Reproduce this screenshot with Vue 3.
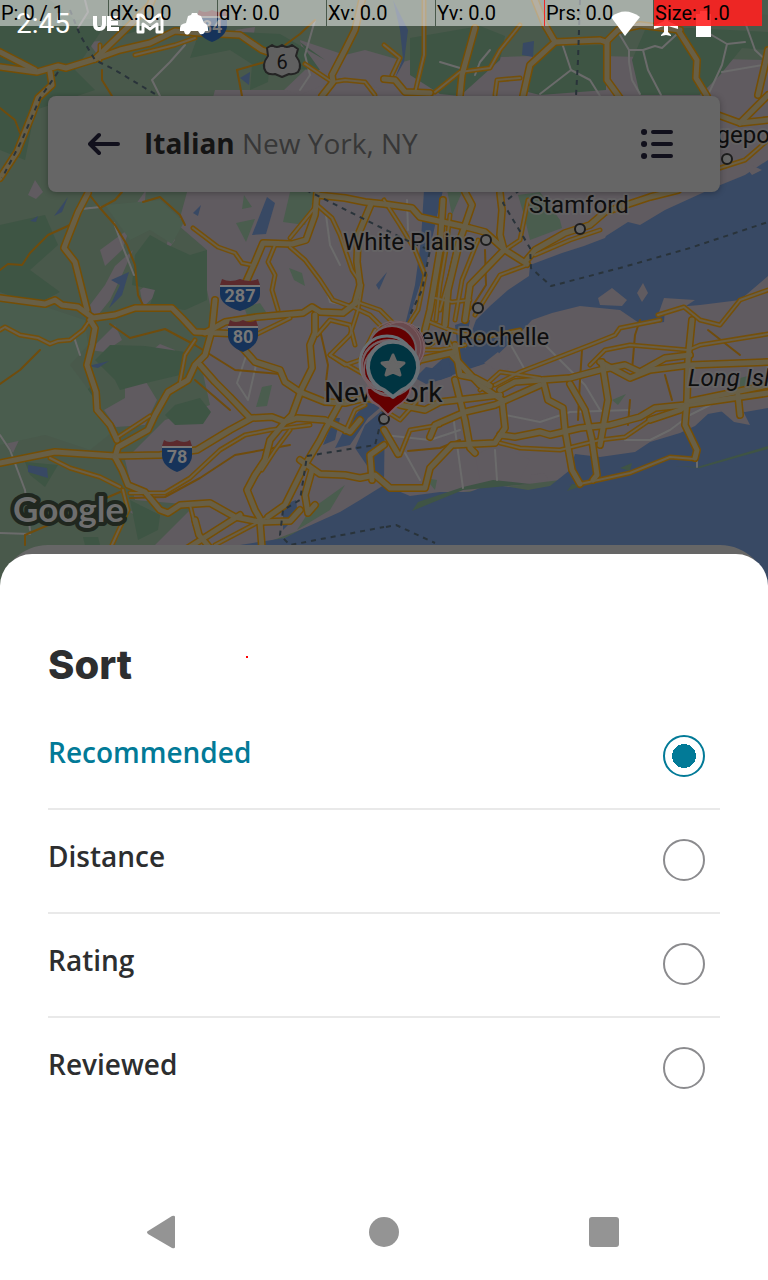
<script setup>
import { ref } from 'vue'

const selected = ref('Recommended')
const options = ['Recommended', 'Distance', 'Rating', 'Reviewed']

const pointerCells = [
  { text: 'P: 0 / 1' },
  { text: 'dX: 0.0' },
  { text: 'dY: 0.0' },
  { text: 'Xv: 0.0' },
  { text: 'Yv: 0.0', edge: true },
  { text: 'Prs: 0.0' },
  { text: 'Size: 1.0', hot: true }
]

const urban = [
  '215,90 300,90 410,60 560,55 768,60 768,420 560,480 400,500 340,515 260,545 155,545 195,505 135,500 125,460 165,420 210,405 200,360 215,330 207,290 207,250 178,225',
  '300,40 345,55 365,50 400,60 385,90 340,78 300,95 284,90 305,70',
  '28,195 35,180 43,192 36,199', '100,250 130,228 122,250 105,266', '128,215 146,190 144,210 134,225',
  '165,250 170,233 175,240 168,250', '90,305 105,285 115,266 133,250 122,275 110,300 94,320', '140,290 178,262 172,280 143,307',
  '172,280 180,270 186,284', '104,410 125,398 125,378 140,372 157,400 145,425 116,427', '43,390 57,369 76,380 67,388 57,377',
  '20,361 38,339 42,346 27,364', '90,350 115,325 122,340 104,352', '150,352 160,344 175,350 172,361 155,360',
  '5,440 20,438 13,453', '130,512 140,505 147,512 140,519', '235,30 255,27 253,40 243,39', '88,42 100,41 97,54'
]

const darkGreen = [
  '0,0 50,0 75,20 110,18 75,70 95,90 35,110 25,160 0,150', '200,30 280,34 325,60 300,42 320,70 258,68 230,50 190,58',
  '410,38 480,26 505,36 500,60 460,96 440,94 410,75', '530,66 556,46 606,45 606,90 540,95 528,92',
  '645,30 690,28 768,32 768,50 742,48 720,75 700,95 640,95 632,60',
  '0,225 45,215 58,245 30,270 60,292 35,305 0,292', '135,255 150,235 168,245 190,255 207,250 207,300 185,310 150,305 155,290 132,285',
  '95,360 110,345 145,346 185,352 180,375 150,382 120,390 115,380', '0,395 18,382 28,405 18,430 0,430',
  '165,415 175,405 200,398 211,412 203,424 175,425', '78,400 90,387 98,405 88,411', '25,462 58,465 45,487 30,475', '130,500 160,515 158,530 138,540',
  '252,65 270,55 268,82 250,90', '120,10 150,8 140,30 124,35', '83,537 98,537 100,545 85,545'
]

const lightGreen = [
  '0,300 40,305 85,320 88,345 70,365 85,385 115,430 90,450 45,435 0,445', '105,205 160,200 184,222 172,244 150,230 130,240',
  '290,192 316,192 305,225 283,222', '236,223 255,219 246,242', '244,195 252,207 242,209', '289,268 302,273 305,286 294,280',
  '262,387 272,385 267,406 256,407', '244,307 260,303 268,315 250,323', '518,195 540,192 560,220 562,228 530,240 524,215',
  '447,190 463,190 452,215', '600,290 615,293 615,305 604,304', '715,0 768,0 768,15 735,12', '612,400 626,394 618,405',
  '425,478 437,480 435,490', '740,378 748,376 747,392 740,394', '297,530 310,510 345,485 330,510', '510,465 520,470 513,478'
]

const water = [
  '768,160 745,175 718,186 700,194 665,210 640,225 628,222 606,236 605,238 584,246 562,253 530,265 529,276 508,290 490,306 476,320 465,350 448,354 430,370 440,380 460,372 490,362 518,335 532,320 552,313 580,306 620,310 642,325 664,322 665,308 700,305 740,300 768,276',
  '768,408 745,412 730,410 708,414 695,426 680,433 650,442 635,452 600,457 575,454 570,470 550,486 528,490 490,484 470,492 440,492 410,496 384,485 360,500 340,512 300,530 285,538 240,545 200,590 768,590',
  '424,190 443,190 434,230 425,270 415,300 400,350 388,392 382,406 368,418 350,445 335,448 345,428 380,385 400,345 415,285 421,240',
  '365,425 385,408 384,482 370,470 355,448', '415,378 426,367 442,370 440,362 448,356 452,376 440,380 426,384',
  '323,445 334,418 340,418 335,440', '129,272 111,280 120,285 109,308 122,295', '193,213 201,205 198,216', '267,197 275,203 266,234 252,235',
  '30,221 38,216 36,222', '54,216 68,197 62,212', '28,465 47,468 48,478 28,472', '393,0 408,30 404,62 395,78 403,58 400,30',
  '523,43 534,41 533,57 522,55', '240,78 250,72 249,85', '283,530 283,505 296,500 298,515', '88,366 109,361 98,368', '376,285 387,272 379,290',
  '455,325 470,320 465,348 480,365 460,370'
]

const islets = [
  '484,363 498,352 510,368 500,372', '598,298 612,288 627,300 622,306 600,305', '637,293 643,283 648,293 642,302', '658,315 664,298 695,300 680,310',
  '530,475 545,473 548,480 532,482', '475,455 500,443 530,460 520,480 480,480', '720,410 740,405 750,425 734,422', '740,160 762,170 752,175'
]

const beach = [
  '412,511 418,502 463,487 493,480 530,484 463,490', '567,491 572,484 585,485', '675,466 697,467 768,446 768,449 700,468', '620,468 632,463 630,471'
]

const major = [
  '0,67 37,72 58,66 66,68 95,59 120,50 150,43 175,31 200,33 240,35 262,50 280,56', '0,52 35,70', '95,59 130,25 150,5 152,0',
  '50,72 52,85 38,98 33,112 17,152 0,178', '362,0 355,30 345,50 332,75 333,82 322,96', '384,79 395,80 405,92 430,93', '475,28 462,75 460,95',
  '535,0 545,25 555,42 530,65 523,96', '555,42 600,40 606,42 618,30 640,25 680,30', '607,42 607,80 620,98', '678,30 697,60 696,78 707,96', '768,50 765,65 758,95',
  '88,193 78,212 67,240 64,248 75,262 87,310', '0,298 45,304 55,300 62,305 78,307 93,318 115,315 135,308 172,308 182,318 195,332 240,334',
  '317,192 315,215 306,240 292,244 263,243 255,262 246,282', '317,195 345,198 365,202 384,204 412,208 420,217 470,228 485,232 505,250 527,264',
  '371,204 358,235 357,262 360,285 355,303', '205,333 225,322 257,317 303,313 312,307 320,312 343,313 357,302', '315,315 315,333 310,345 312,368 302,388 292,415 285,422',
  '0,463 55,452 115,456 160,455 197,450 230,430 252,418 272,417 285,422 297,418 325,420 350,432 360,420', '90,320 95,328 92,345 87,365 96,392 97,410 110,425 117,440',
  '115,457 118,447 148,430 155,415 168,392 188,380 195,365 205,355 212,330 215,300', '200,365 215,382 230,397 250,418', '240,345 255,362 280,370 285,382 300,392 325,402 345,403 365,398 384,401',
  '115,457 122,470 128,485 145,492 160,510 168,513 180,505 210,503 235,517 260,522 290,521 300,510', '260,522 262,548', '340,403 325,430 320,440 305,465 285,505 268,517',
  '285,422 270,440 265,460 255,475 247,490 255,510 262,522', '185,550 240,515', '195,520 199,535 210,548', '300,460 320,474 345,475 360,478 375,475 390,488 425,488 430,468 452,445 495,443 505,428 502,400',
  '312,470 305,495 308,513 315,505', '430,437 435,425 465,412 495,405 540,385', '500,435 515,437 540,432 550,435 580,428 610,425 640,417 655,408 685,405 720,400 768,393',
  '543,380 548,400 563,408 565,430 572,470 580,484', '570,384 585,410 592,440 597,475 593,480', '452,355 480,385 502,400', '500,390 515,382 570,378 600,370 625,365 640,372 665,358 690,355',
  '600,362 630,378 650,370 690,365 768,362', '692,320 688,360 687,400 685,425 697,450 695,458', '602,362 608,400 600,445', '455,345 460,375 475,378 490,386', '455,352 420,360 405,375',
  '384,430 398,454', '455,380 465,420 470,448 475,453', '443,200 440,250 430,310 425,330', '465,192 472,205 460,240 448,290 445,325', '500,193 502,210 500,235 504,250 470,285 465,320',
  '525,262 535,250 565,233 590,225 605,212 650,197 678,190', '718,115 740,123 768,120', '740,123 768,95', '687,402 730,393 768,385', '372,480 370,455 384,445', '650,420 680,410 687,405', '738,395 740,415',
  '400,405 425,410 440,402 500,395'
]

const minor = [
  '100,60 100,45', '135,55 175,45 195,38', '305,64 332,82 345,80 365,82 375,95', '384,45 400,58 392,75', '424,0 424,55 418,80 415,93', '435,92 460,72 490,68 500,50 520,25',
  '495,95 497,80 520,78', '193,228 218,247 235,253 242,263 252,265', '317,205 290,238', '317,205 332,218 340,235 352,270 362,285 358,310', '275,245 268,262 275,275 272,290 278,310',
  '290,247 305,260 320,280 333,300 355,308 370,315 380,325', '357,302 380,310 395,325', '0,330 5,327 20,335 38,338 50,344 58,341 70,340 83,330 90,320', '118,437 150,416', '180,382 185,355 195,340',
  '130,493 165,493 190,478 220,450 245,435 270,430 310,425', '50,458 70,468 100,477 120,487', '112,545 128,510 123,490', '384,200 400,225 415,250 425,275 418,310 405,330',
  '450,215 446,250 440,285 436,320', '458,240 450,275 440,310', '478,240 462,280 455,320', '435,298 452,302 470,300', '527,265 500,275 475,315', '528,200 520,240 505,250',
  '768,140 745,160 720,168', '580,484 630,473 670,457 695,459', '590,365 605,350 630,345 688,350 700,345 768,334', '495,385 520,372 590,345 615,335 620,328 660,320', '500,443 520,448 560,450 600,440 625,437 650,420',
  '330,355 345,365 360,360 375,330', '358,310 350,335 330,355 365,375', '215,332 255,335 290,318', '317,335 330,320 350,325 355,345', '345,432 355,410 365,405', '405,345 430,345 445,335 455,352', '480,390 500,372 540,378',
  '658,315 684,307 700,320 720,325 740,300 768,290', '400,455 410,430 440,425', '465,345 440,350 420,350', '215,545 268,517', '290,430 275,450 262,470', '535,255 570,240 600,230', '384,410 400,420 420,398', '190,505 195,525',
  '430,322 450,330 480,338 520,330'
]

const narrow = [
  '0,108 15,120 20,133', '102,70 102,80 112,96', '237,70 265,62', '237,70 242,96', '285,45 300,34 315,20', '88,193 100,208 115,225 127,245 135,265 138,295 143,305', '100,208 115,200 122,192',
  '143,202 160,197 180,215 185,225', '0,270 8,264 22,265 30,253 48,235 70,225', '130,498 165,497 200,478 235,455 290,445', '25,545 25,535 60,520 90,505 120,492', '0,384 20,370 40,350',
  '110,324 130,338 165,329 195,345 235,370 280,374', '408,451 440,448 460,440', '640,320 635,335 632,370', '582,350 580,380 578,420', '665,375 672,400', '708,330 740,355', '630,400 628,425', '485,250 486,285 470,310', '195,380 230,410', '320,330 328,365 325,390'
]

const pale = [
  '85,0 88,12 78,28', '185,45 170,62 152,80 160,96', '315,20 305,55 310,75 300,90', '90,208 82,209 100,207', '114,223 122,245 134,275', '0,435 10,450 25,490 30,530', '0,533 30,534',
  '248,350 237,383 248,400 256,365', '325,285 330,302 345,305', '490,50 480,62 475,75', '540,94 571,70 561,40', '571,70 590,80 600,96',
  '620,35 629,50 629,62 632,80 640,94', '629,50 643,50 648,70 661,95', '643,50 655,46 662,48 676,35', '710,34 727,44 745,42', '727,44 722,65 708,95', '745,22 755,50 768,62', '722,72 768,64',
  '453,415 463,488', '384,435 430,440 460,430', '405,453 420,480', '495,450 497,480', '505,415 540,422 570,412 630,410', '545,345 585,385 600,410', '625,440 650,440 670,430 690,415 710,405', '80,355 75,340',
  '326,215 330,245 340,265', '407,200 408,230', '440,62 460,68', '697,458 697,467', '508,340 525,370'
]

const borders = [
  '70,10 80,35 95,60 115,70 155,94', '58,72 40,98 22,140 2,178', '306,190 410,242 430,250 422,290 410,315', '384,410 375,445 307,456 300,500 283,510 280,535 290,545 384,527', '386,527 396,525 435,543',
  '580,0 578,60 576,96', '520,190 503,203 530,248 531,268 551,286 620,268 690,248 768,222'
]

const towns = [[486, 240], [580, 229], [478, 308], [727, 159], [384, 419]]
const shields = [
  { x: 240, y: 294, w: 40, n: '287' },
  { x: 243, y: 335, w: 30, n: '80' },
  { x: 177, y: 455, w: 30, n: '78' },
  { x: 212, y: 25, w: 30, n: '84' }
]
const pinHalos = [[398, 348, 26], [395, 347, 26], [401, 346, 24]]
</script>

<template>
  <div class="screen">
    <svg class="map" viewBox="0 0 768 590" aria-hidden="true">
      <rect width="768" height="590" fill="#49594b" />
      <g fill="#605b60"><polygon v-for="p in urban" :key="p" :points="p" /></g>
      <g fill="#3e5544"><polygon v-for="p in darkGreen" :key="p" :points="p" /></g>
      <g fill="#4a5d4e"><polygon v-for="p in lightGreen" :key="p" :points="p" /></g>
      <g fill="#384964"><polygon v-for="p in water" :key="p" :points="p" /></g>
      <g fill="#605b60"><polygon v-for="p in islets" :key="p" :points="p" /></g>
      <g fill="#3f5445"><polygon v-for="p in beach" :key="p" :points="p" /></g>
      <g class="line pale"><polyline v-for="p in pale" :key="p" :points="p" /></g>
      <g class="line narrow"><polyline v-for="p in narrow" :key="p" :points="p" /></g>
      <g class="line minor-edge"><polyline v-for="p in minor" :key="p" :points="p" /></g>
      <g class="line major-edge"><polyline v-for="p in major" :key="p" :points="p" /></g>
      <g class="line minor-fill"><polyline v-for="p in minor" :key="p" :points="p" /></g>
      <g class="line major-fill"><polyline v-for="p in major" :key="p" :points="p" /></g>
      <g class="line border"><polyline v-for="p in borders" :key="p" :points="p" /></g>

      <g fill="#666" stroke="#1c1c1c" stroke-width="2">
        <circle v-for="t in towns" :key="t[0]" :cx="t[0]" :cy="t[1]" r="5" />
      </g>

      <g v-for="s in shields" :key="s.n" :transform="`translate(${s.x} ${s.y})`">
        <path :d="`M${-s.w / 2} -7H${s.w / 2}V0Q${s.w / 2} 11 0 17Q${-s.w / 2} 11 ${-s.w / 2} 0Z`" fill="#16335a" />
        <path :d="`M${-s.w / 2} -9L${2 - s.w / 2} -15Q${-s.w / 4} -11 0 -15Q${s.w / 4} -11 ${s.w / 2 - 2} -15L${s.w / 2} -9Z`" fill="#5c2a2d" />
        <path :d="`M${-s.w / 2} -8H${s.w / 2}`" stroke="#777" stroke-width="2" />
        <text class="shield-text" y="8">{{ s.n }}</text>
      </g>
      <path d="M267 48L272 45Q277 49 282 45Q287 49 292 45L298 49L296 56Q303 65 298 72Q294 75 289 74L282 77L275 74Q269 75 266 72Q261 65 268 56Z" fill="#606060" stroke="#242424" stroke-width="2" stroke-linejoin="round" />
      <text class="route-text" x="282" y="69">6</text>

      <g class="place">
        <text x="343" y="250">White Plains</text>
        <text x="529" y="213">Stamford</text>
        <text x="404" y="345">New Rochelle</text>
        <text x="674" y="143">Bridgeport</text>
        <text class="region" x="688" y="386">Long Island</text>
        <text class="city" x="324" y="402">New York</text>
      </g>

      <path d="M367 388Q366 399 379 406L388 415L396 407Q410 399 411 387Z" fill="#640000" stroke="#775a60" stroke-width="2" />
      <circle cx="398" cy="348" r="27" fill="#6a4a4e" />
      <g fill="none" stroke="#7a6266" stroke-width="1">
        <circle v-for="p in pinHalos" :key="p[0]" :cx="p[0]" :cy="p[1]" :r="p[2]" />
      </g>
      <circle cx="392" cy="350" r="24" fill="#640000" stroke="#6d6063" stroke-width="2" />
      <circle cx="387" cy="363" r="27" fill="#640000" stroke="#697075" stroke-width="3" />
      <g fill="none" stroke="#745f63" stroke-width="2">
        <circle cx="386" cy="365" r="24" /><circle cx="389" cy="367" r="27" /><circle cx="390" cy="370" r="26" />
      </g>
      <path d="M384 390A25 25 0 1 1 402 390L393 397Z" fill="#003441" stroke="#697075" stroke-width="4" stroke-linejoin="round" />
      <path d="M393 355L396 362L404 363L398 368L400 375L393 372L386 375L388 368L382 363L390 362Z" fill="#666" stroke="#666" stroke-width="3" stroke-linejoin="round" />
      <text class="google" x="13" y="522">Google</text>
    </svg>

    <div class="status">
      <time>2:45</time>
      <svg width="124" height="28" viewBox="0 0 124 28" aria-hidden="true">
        <g fill="none" stroke="#fff" stroke-width="4">
          <path d="M5 6V14Q5 19 9 19Q14 19 14 14V6M29 8H19V19H29M19 13H28" />
          <path d="M48 22V5H51L60 12L69 5H72V22H67V14L60 19L53 14V22Z" stroke-width="3" stroke-linejoin="round" />
        </g>
        <path d="M96 13L98 6L101 5L102 3H107L108 5L111 6L114 13Q118 14 118 19V21H115Q114 25 110 24L108 21H101L99 24Q95 26 94 21H90V18Q90 14 96 13Z" fill="#fff" />
      </svg>
      <svg class="signals" width="104" height="28" viewBox="0 0 104 28" fill="#fff" aria-hidden="true">
        <path d="M1 7Q15 -4 30 7L15 26Z" />
        <path d="M54 4Q56 1 58 4V11L68 16V19L58 16V22L61 25V26L56 25L51 26V25L54 22V16L44 19V16L54 11Z" />
        <path d="M86 4H90V1H98V4H101V27H86Z" />
      </svg>
    </div>

    <div class="pointer-bar">
      <span v-for="c in pointerCells" :key="c.text" :class="{ hot: c.hot, edge: c.edge }">{{ c.text }}</span>
    </div>

    <header class="search">
      <button class="icon-button" type="button" aria-label="Back">
        <svg width="32" height="32" viewBox="0 0 32 32" fill="none" stroke="#11101c" stroke-width="4" stroke-linecap="round" stroke-linejoin="round"><path d="M30 16H3M11 7L2 16L11 25" /></svg>
      </button>
      <button class="query" type="button"><strong>Italian</strong> New York, NY</button>
      <button class="icon-button" type="button" aria-label="List view">
        <svg width="32" height="32" viewBox="0 0 32 32" fill="none" stroke="#11101c" stroke-width="4" stroke-linecap="round"><path d="M12 4H30M12 16H30M12 28H30" /><path d="M3 4H3.1M3 16H3.1M3 28H3.1" stroke-width="6" /></svg>
      </button>
    </header>

    <div class="panel">
      <main class="sheet">
        <span class="trace" aria-hidden="true"></span>
        <h1 id="sort-title">Sort</h1>
        <div class="options" role="radiogroup" aria-labelledby="sort-title">
          <label v-for="o in options" :key="o" :class="{ active: selected === o }">
            <span>{{ o }}</span>
            <input v-model="selected" type="radio" name="sort" :value="o" />
          </label>
        </div>
        <nav class="system">
          <button type="button" aria-label="Back"><svg width="36" height="36" viewBox="0 0 36 36"><path d="M6 17Q4 18 6 20L30 34Q33 35 33 33V3Q33 1 30 2Z" /></svg></button>
          <button type="button" aria-label="Home"><svg width="36" height="36" viewBox="0 0 36 36"><ellipse cx="18" cy="18" rx="15" ry="15" /></svg></button>
          <button type="button" aria-label="Recent apps"><svg class="recent" width="36" height="36" viewBox="0 0 36 36"><rect x="-1" y="3" width="30" height="30" rx="3" /></svg></button>
        </nav>
      </main>
    </div>
  </div>
</template>

<style>
body { margin: 0; }
</style>

<style scoped>
.screen {
  position: relative;
  box-sizing: border-box;
  min-height: 100vh;
  display: flex;
  flex-direction: column;
  overflow: hidden;
  background: #384964;
  font-family: "Open Sans", "Noto Sans", sans-serif;
}
button { border: 0; padding: 0; background: none; font: inherit; cursor: pointer; }
svg { display: block; }

.map { position: absolute; top: 0; left: 0; width: 100%; height: auto; }
.line { fill: none; stroke-linejoin: round; stroke-linecap: round; }
.pale { stroke: #6b6b6b; stroke-width: 2; }
.narrow { stroke: #704c0c; stroke-width: 2; }
.minor-edge { stroke: #75500a; stroke-width: 5; }
.minor-fill { stroke: #6a5f47; stroke-width: 2; }
.major-edge { stroke: #754e05; stroke-width: 8; }
.major-fill { stroke: #685f46; stroke-width: 5; }
.border { stroke: #29333a; stroke-width: 2; stroke-dasharray: 5 5; stroke-linecap: butt; }
.shield-text, .route-text { font: 700 18px Roboto, sans-serif; fill: #777; text-anchor: middle; }
.route-text { font-weight: 400; font-size: 20px; fill: #111; }
.place { font: 24px Roboto, sans-serif; fill: #0e0e0e; stroke: #666; stroke-opacity: 0.7; stroke-width: 4; paint-order: stroke; stroke-linejoin: round; }
.city { font-size: 28px; }
.region { font-style: italic; }
.google { font: 700 35px Lato, sans-serif; fill: #6e6e6e; stroke: #20271f; stroke-width: 8; paint-order: stroke; stroke-linejoin: round; }

.status { position: relative; display: flex; align-items: center; gap: 20px; height: 48px; padding: 0 54px 0 16px; color: #fff; }
.status time { font: 28px/48px Roboto, sans-serif; }
.signals { margin-left: auto; }
.pointer-bar { position: absolute; top: 0; left: 0; right: 6px; display: grid; grid-template-columns: repeat(7, 1fr); gap: 1px; color: #000; font: 20px/26px Roboto, sans-serif; }
.pointer-bar span { padding-left: 1px; background: rgba(255, 255, 255, 0.5); white-space: nowrap; }
.pointer-bar .edge { box-shadow: 1px 0 0 #f02828; }
.pointer-bar .hot { background: rgba(255, 32, 32, 0.9); }

.search {
  position: relative;
  display: flex;
  align-items: center;
  gap: 24px;
  height: 96px;
  box-sizing: border-box;
  margin: 48px 48px 0;
  padding: 0 47px 0 40px;
  border-radius: 8px;
  background: #666;
  box-shadow: 0 1px 6px rgba(0, 0, 0, 0.3);
}
.query { flex: 1; padding-bottom: 2px; text-align: left; color: #373737; font-size: 28px; line-height: 40px; }
.query strong { color: #141414; font-weight: 700; }

.panel { position: relative; margin-top: auto; padding-top: 9px; border-radius: 48px 48px 0 0; background: #666; }
.sheet { position: relative; padding: 87px 48px 0; border-radius: 32px 32px 0 0; background: #fff; color: #2d2e2f; }
.trace { position: absolute; top: 102px; left: 246px; width: 2px; height: 2px; background: #f00; }
h1 { margin: 0 0 17px; font: 800 40px/48px Inter, sans-serif; }
label { display: flex; align-items: flex-start; justify-content: space-between; padding: 29px 15px 31px 0; border-bottom: 2px solid #e9e9e9; font-size: 28px; line-height: 34px; font-weight: 600; cursor: pointer; }
label:last-child { border-bottom: 0; }
label.active { color: #027a97; }
input { appearance: none; box-sizing: border-box; width: 42px; height: 42px; margin: 0; border: 2px solid #8b8b8e; border-radius: 50%; cursor: pointer; }
input:checked { border-color: #027a97; background: radial-gradient(circle, #027a97 12px, transparent 12px); }
.system { display: grid; grid-template-columns: repeat(3, 1fr); justify-items: center; align-items: center; height: 96px; margin-top: 64px; }
.system svg { fill: #949494; }
.system .recent { overflow: visible; }
</style>
